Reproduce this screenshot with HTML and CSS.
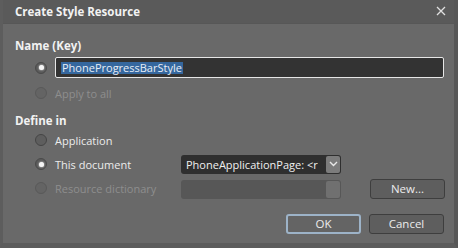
FILE: index.html
```html
<!DOCTYPE html>
<html lang="en">
<head>
    <meta charset="UTF-8">
    <title>Create Style Resource</title>
    <link rel="stylesheet" href="styles.css">
</head>
<body>
    <div class="dialog">
        <div class="titlebar">
            <span class="title">Create Style Resource</span>
            <span class="close">
                <svg width="10" height="10" viewBox="0 0 10 10"><path d="M1 1L9 9M9 1L1 9" stroke="#e0e0e0" stroke-width="1.3"/></svg>
            </span>
        </div>

        <div class="content">
            <div class="heading">Name (Key)</div>
            <div class="row row-name">
                <span class="radio checked"></span>
                <div class="textbox"><span class="selected">PhoneProgressBarStyle</span></div>
            </div>
            <div class="row row-apply">
                <span class="radio disabled"></span>
                <span class="label disabled">Apply to all</span>
            </div>

            <div class="heading heading-define">Define in</div>
            <div class="row row-opt row-first">
                <span class="radio"></span>
                <span class="label">Application</span>
            </div>
            <div class="row row-opt">
                <span class="radio checked"></span>
                <span class="label label-wide">This document</span>
                <div class="combo">
                    <span class="combo-text">PhoneApplicationPage: &lt;r</span>
                    <span class="combo-btn">
                        <svg width="9" height="6" viewBox="0 0 9 6"><path d="M1 1L4.5 4.5L8 1" stroke="#e8e8e8" stroke-width="1.4" fill="none"/></svg>
                    </span>
                </div>
            </div>
            <div class="row row-opt">
                <span class="radio disabled"></span>
                <span class="label label-wide disabled">Resource dictionary</span>
                <div class="combo combo-off">
                    <span class="combo-text"></span>
                    <span class="combo-btn"></span>
                </div>
                <button class="btn btn-new">New...</button>
            </div>

            <div class="actions">
                <button class="btn btn-ok">OK</button>
                <button class="btn">Cancel</button>
            </div>
        </div>
    </div>
</body>
</html>
```

FILE: styles.css
```css
html, body {
    margin: 0;
    padding: 0;
    background-color: #686868;
}
.dialog {
    width: 458px;
    height: 248px;
    box-sizing: border-box;
    background-color: #696969;
    font-family: "Open Sans", sans-serif;
    font-size: 11px;
    color: #ececec;
    border-left: 3px solid #5d5d5d;
    border-right: 4px solid #575757;
    border-bottom: 5px solid #5c5c5c;
    overflow: hidden;
}
.titlebar {
    height: 24px;
    margin-left: -3px;
    margin-right: -4px;
    background-color: #5a5a5a;
    border-bottom: 1px solid #575757;
    box-sizing: border-box;
    display: flex;
    align-items: center;
    justify-content: space-between;
    padding: 0 12px 0 15px;
}
.title {
    font-weight: bold;
    font-size: 11.5px;
    color: #f2f2f2;
    margin-top: -1px;
}
.close {
    display: flex;
    margin-top: -2px;
}
.content {
    padding: 13px 0 0 12px;
}
.heading {
    font-weight: bold;
    font-size: 11.5px;
    color: #f2f2f2;
    height: 18px;
    line-height: 18px;
}
.heading-define {
    margin-top: 10px;
}
.row {
    display: flex;
    align-items: center;
}
.row-name {
    height: 21px;
    margin-top: 2px;
}
.row-apply {
    height: 18px;
    margin-top: 6px;
}
.row-opt {
    height: 20px;
    margin-top: 4px;
}
.row-first {
    margin-top: 0;
}
.radio {
    width: 12px;
    height: 12px;
    box-sizing: border-box;
    border-radius: 50%;
    border: 1px solid #454545;
    background-color: #5e5e5e;
    margin-left: 20px;
    margin-right: 8px;
    flex-shrink: 0;
    position: relative;
}
.radio.checked {
    background-color: #5a5a5a;
    border-color: #4a4a4a;
}
.radio.checked::after {
    content: "";
    position: absolute;
    left: 2.5px;
    top: 2.5px;
    width: 5px;
    height: 5px;
    border-radius: 50%;
    background-color: #f4f4f4;
    box-shadow: 0 0 2px #ffffff;
}
.radio.disabled {
    border-color: #595959;
    background-color: #646464;
}
.label.disabled {
    color: #8e8e8e;
}
.label-wide {
    width: 126px;
}
.textbox {
    width: 389px;
    height: 21px;
    box-sizing: border-box;
    background-color: #333333;
    border: 1px solid #e6e6e6;
    border-radius: 2px;
    display: flex;
    align-items: center;
    padding-left: 5px;
}
.selected {
    background-color: #35679e;
    color: #e8eef6;
    line-height: 12px;
    padding: 0 1px;
}
.combo {
    width: 160px;
    height: 19px;
    box-sizing: border-box;
    background-color: #2f2f2f;
    border-radius: 3px;
    display: flex;
    align-items: center;
    justify-content: space-between;
    padding: 1px 1px 1px 5px;
}
.combo-text {
    color: #f0f0f0;
    white-space: nowrap;
    overflow: hidden;
}
.combo-btn {
    width: 14px;
    height: 17px;
    background-color: #7c7c7c;
    border-radius: 2px;
    display: flex;
    align-items: center;
    justify-content: center;
    flex-shrink: 0;
}
.combo-off {
    background-color: #575757;
    margin-top: 2px;
}
.combo-off .combo-btn {
    background-color: #707070;
}
.btn {
    width: 75px;
    height: 20px;
    box-sizing: border-box;
    background-color: #5e5e5e;
    border: 1px solid #3e3e3e;
    border-radius: 3px;
    color: #ececec;
    font-family: "Open Sans", sans-serif;
    font-size: 11.5px;
    padding: 0;
    line-height: 16px;
}
.btn-new {
    margin-left: 29px;
    margin-top: 2px;
}
.actions {
    display: flex;
    justify-content: flex-end;
    gap: 8px;
    margin-top: 16px;
    margin-right: 10px;
}
.btn-ok {
    background-color: #646464;
    border: 2px solid #9db3c8;
}
```
